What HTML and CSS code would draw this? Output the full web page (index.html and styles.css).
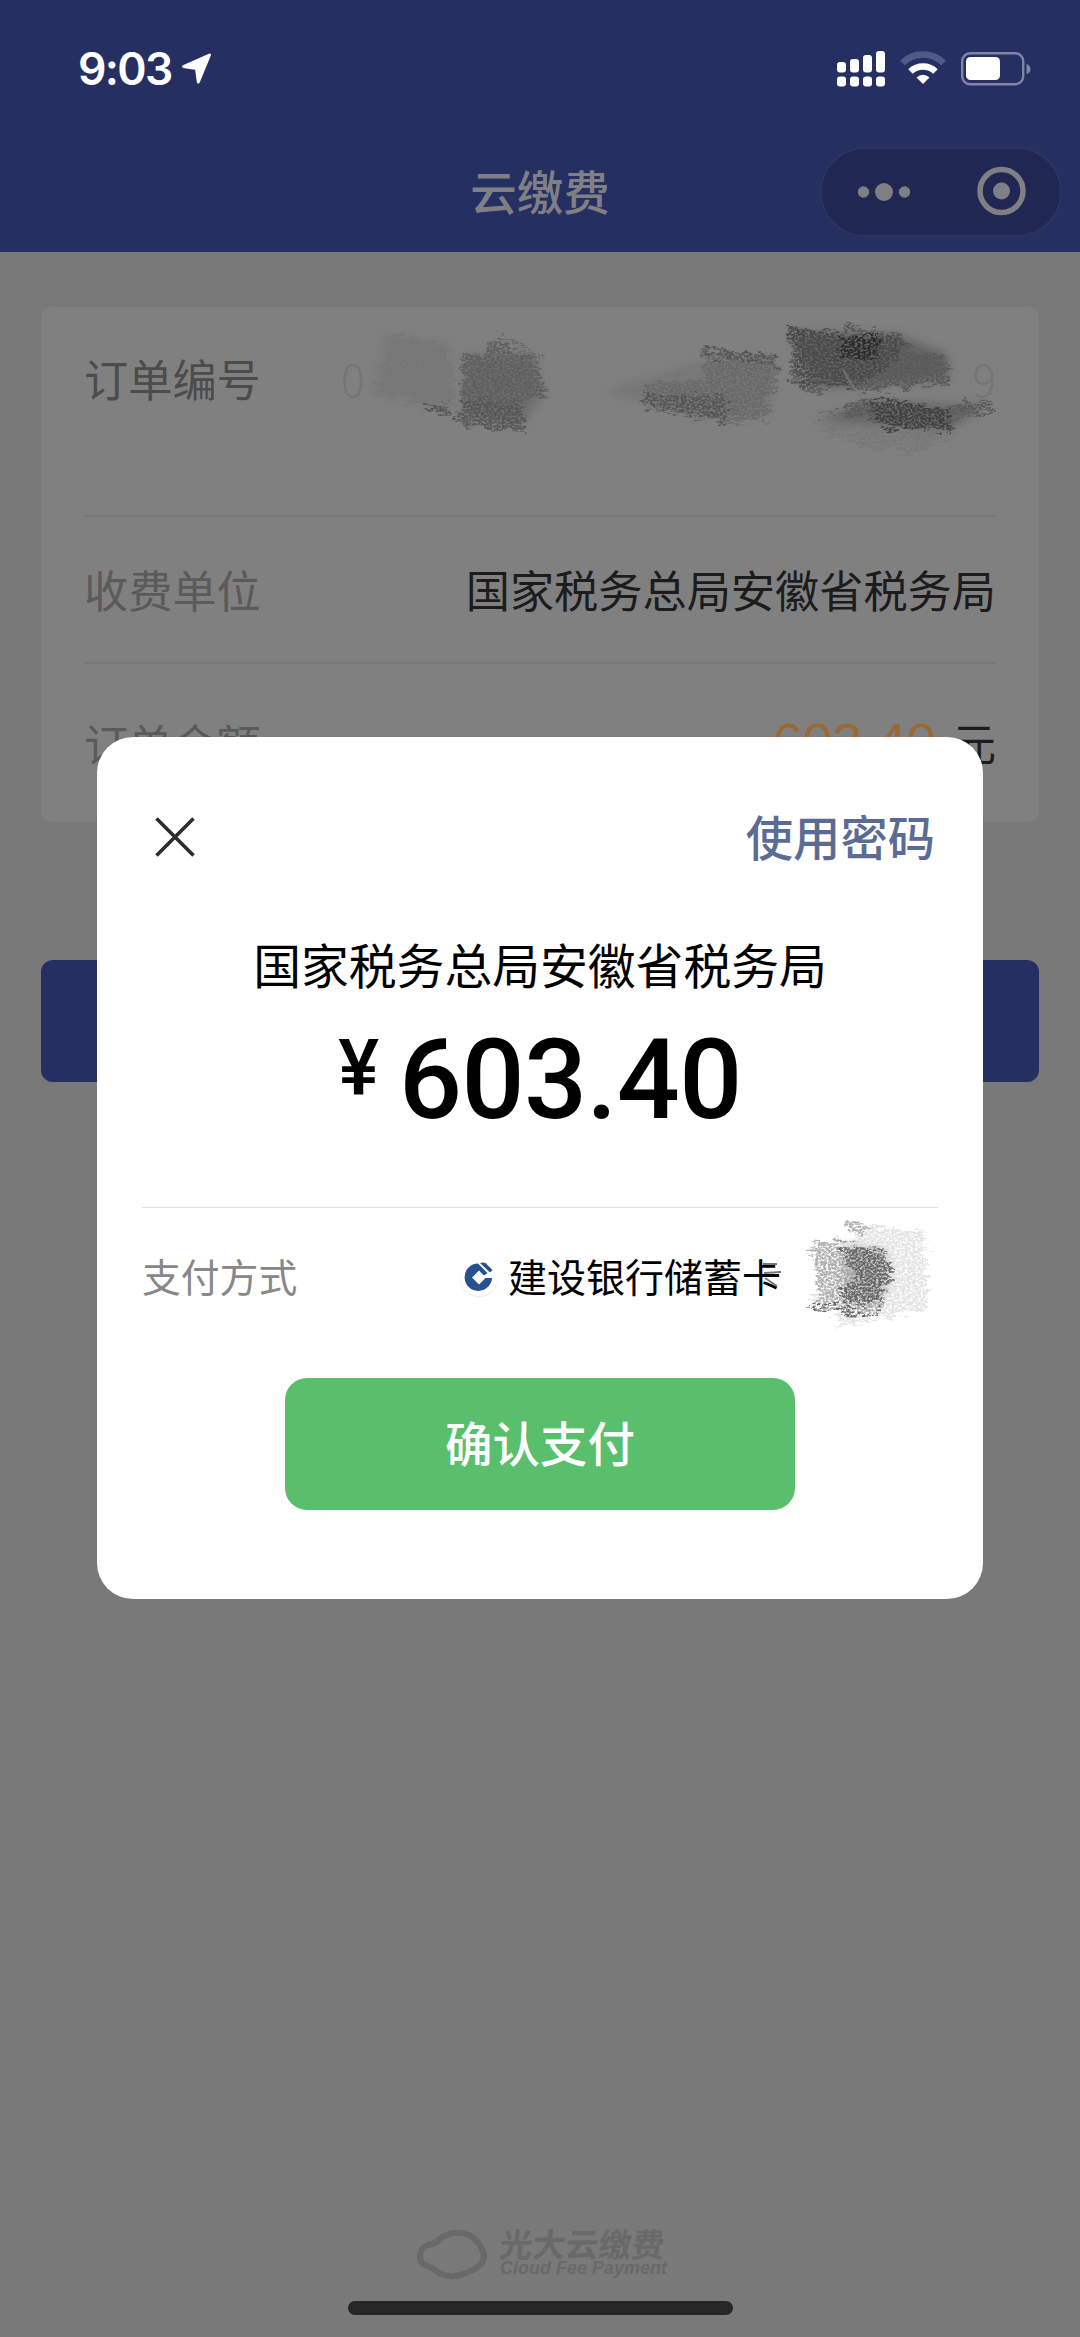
FILE: index.html
```html
<!DOCTYPE html>
<html lang="zh-CN">
<head>
<meta charset="utf-8">
<title>云缴费</title>
<link rel="stylesheet" href="styles.css">
</head>
<body>
<div class="screen">
  <header class="header">
    <div class="status">
      <div class="status-left">
        <span class="time">9:03</span>
        <svg class="location" width="30" height="31" viewBox="0 0 30 31"><path d="M28 2 L2 13.500 L15 15.500 L16.800 29 Z" fill="#fff" stroke="#fff" stroke-width="3" stroke-linejoin="round"/></svg>
      </div>
      <div class="status-right">
        <svg width="48" height="36" viewBox="0 0 48 36" fill="#fff">
          <rect x="0" y="11" width="9" height="10.500" rx="3"/><rect x="13" y="8" width="9" height="13.500" rx="3"/><rect x="26" y="4" width="9" height="17.500" rx="3"/><rect x="39" y="0" width="9" height="21.500" rx="3"/>
          <rect x="0" y="25.500" width="9" height="10" rx="3"/><rect x="13" y="25.500" width="9" height="10" rx="3"/><rect x="26" y="25.500" width="9" height="10" rx="3"/><rect x="39" y="25.500" width="9" height="10" rx="3"/>
        </svg>
        <svg width="46" height="36" viewBox="0 0 46 36">
          <path d="M2.500 12 A29 29 0 0 1 43.500 12" fill="none" stroke="#515a86" stroke-width="6.500"/>
          <path d="M10.500 20.500 A18 18 0 0 1 35.500 20.500" fill="none" stroke="#fff" stroke-width="6.500"/>
          <path d="M23 33 L16.500 26.500 Q23 21 29.500 26.500 Z" fill="#fff"/>
        </svg>
        <svg width="70" height="36" viewBox="0 0 70 36">
          <rect x="1.200" y="2.200" width="61" height="31" rx="8" fill="none" stroke="#7f85a9" stroke-width="2.400"/>
          <rect x="5" y="6" width="34" height="23" rx="4.500" fill="#fff"/>
          <path d="M65.500 13 Q69.500 14 69.500 18 Q69.500 22 65.500 23 Z" fill="#7f85a9"/>
        </svg>
      </div>
    </div>
    <div class="nav">
      <h1 class="nav-title">云缴费</h1>
      <div class="capsule">
        <svg width="120" height="87" viewBox="0 0 120 87" fill="#808084"><circle cx="41.500" cy="44" r="5.700"/><circle cx="62" cy="44" r="9"/><circle cx="82.500" cy="44" r="5.700"/></svg>
        <span class="capsule-line"></span>
        <svg width="118" height="87" viewBox="0 0 118 87"><circle cx="59.500" cy="43" r="21.500" fill="none" stroke="#808084" stroke-width="5.500"/><circle cx="59.500" cy="43" r="8.500" fill="#808084"/></svg>
      </div>
    </div>
  </header>

  <main class="content">
    <section class="card">
      <div class="row row-order"><span class="label dark">订单编号</span><span class="masked"><span>0</span><span>9</span></span></div>
      <div class="row row-payee"><span class="label">收费单位</span><span class="value">国家税务总局安徽省税务局</span></div>
      <div class="row row-amount"><span class="label">订单金额</span><span class="value total"><span class="orange">603.40</span><span>元</span></span></div>
      <svg class="scribble" width="740" height="190" viewBox="300 280 740 190">
        <defs>
          <filter id="chalk" x="-10%" y="-20%" width="120%" height="140%">
            <feTurbulence type="fractalNoise" baseFrequency="0.07 0.22" numOctaves="3" seed="4" result="edge"/>
            <feTurbulence type="fractalNoise" baseFrequency="0.38 0.5" numOctaves="4" seed="11" result="grain"/>
            <feDisplacementMap in="SourceGraphic" in2="edge" scale="22" xChannelSelector="R" yChannelSelector="G" result="d"/>
            <feColorMatrix in="grain" type="matrix" values="0 0 0 0 0  0 0 0 0 0  0 0 0 0 0  4 0 0 0 -1.300" result="a"/>
            <feComposite in="d" in2="a" operator="in"/>
            <feGaussianBlur stdDeviation="0.600"/>
          </filter>
          <filter id="soft" x="-20%" y="-30%" width="140%" height="160%"><feGaussianBlur stdDeviation="5"/></filter>
        </defs>
        <g filter="url(#soft)" opacity=".5">
          <path d="M382 333 L451 343 458 412 372 395Z" fill="#777"/>
          <path d="M464 356 L535 355 542 395 523 425 465 415Z" fill="#5c5c5c"/>
          <path d="M600 392 L705 360 776 358 769 415 720 418Z" fill="#707070"/>
          <path d="M790 332 L898 335 948 355 948 380 815 388Z" fill="#444"/>
          <path d="M815 422 L867 400 985 406 950 430Z" fill="#505050"/>
        </g>
        <g filter="url(#chalk)">
          <path d="M390 333 L445 343 456 380 451 412 405 400 372 395 386 370Z" fill="#747474" opacity=".5"/>
          <path d="M420 403 L452 408 451 414 422 409Z" fill="#555"/>
          <path d="M460 352 L482 355 496 340 537 360 545 397 525 400 523 432 472 427 453 420 463 413Z" fill="#5f5f5f"/>
          <path d="M463 398 L524 404 523 432 455 420Z" fill="#525252" opacity=".7"/>
          <path d="M496 332 L540 357" stroke="#606060" stroke-width="3"/>
          <path d="M643 383 L705 380 702 348 776 355 779 387 769 393 769 420 726 423 643 407Z" fill="#666" opacity=".85"/>
          <path d="M702 348 L776 355 775 367 706 357ZM645 393 L726 397 726 421 645 406Z" fill="#555"/>
          <path d="M787 327 L843 335 843 326 898 333 914 342 905 353 943 353 952 385 884 388 860 393 846 383 815 393 788 382 795 360 787 348Z" fill="#5a5a5a"/>
          <path d="M787 327 L905 339 900 352 882 375 850 385 800 383 795 355Z" fill="#454545" opacity=".8"/>
          <path d="M840 335 L881 337 879 359 843 360Z" fill="#2c2c2c"/>
          <path d="M807 425 L867 398 950 408 991 398 991 412 953 417 950 430 879 428 867 417 840 413Z" fill="#5a5a5a"/>
          <path d="M867 399 L948 409 950 430 879 428Z" fill="#404040"/>
          <path d="M815 430 L950 433 948 442 919 453 871 450Z" fill="#707070" opacity=".5"/>
        </g>
        <path d="M843 369 L852 386 862 399" stroke="#777" stroke-width="2.500" fill="none" opacity=".7"/>
      </svg>
    </section>
    <div class="pay-bar"></div>
  </main>

  <footer class="brand">
    <svg width="72" height="50" viewBox="0 0 72 50"><path d="M7 34 C2 29 3 18 12 15 Q17 14 21 12 C28 3 43 0 53 5 C62 9 65 16 67 22 C71 34 58 40 50 43 C40 48 27 47 19 40 Q14 37 7 34Z" fill="none" stroke="#696969" stroke-width="6"/></svg>
    <div class="brand-text"><div class="brand-cn">光大云缴费</div><div class="brand-en">Cloud Fee Payment</div></div>
  </footer>
  <div class="home"></div>

  <section class="modal">
    <div class="modal-top">
      <svg class="close" width="40" height="40" viewBox="0 0 40 40"><path d="M1.500 1.500 L38.500 38.500 M38.500 1.500 L1.500 38.500" stroke="#2c2c2c" stroke-width="3.600"/></svg>
      <span class="use-password">使用密码</span>
    </div>
    <div class="payee">国家税务总局安徽省税务局</div>
    <div class="amount"><span class="yen">¥</span><span class="figure">603.40</span></div>
    <div class="method">
      <span class="method-label">支付方式</span>
      <div class="bank">
        <span class="bank-icon"><svg width="30" height="30" viewBox="0 0 30 30"><path d="M14 1.500 A13.700 13.700 0 1 0 28 16 L21.500 16 L15 22.500 L8 15.500 L15 8.500 L20 13.500 L23.500 11 Z" fill="#27508f"/><path d="M16 1 Q20 0 22 1.500 L28.500 8 L26 10.500 Z" fill="#27508f"/></svg></span>
        <span class="bank-name">建设银行储蓄卡</span>
      </div>
      <svg class="card-scribble" width="150" height="130" viewBox="795 1215 150 130">
        <path d="M842 1246 L887 1252 890 1285 880 1305 845 1305Z" fill="#888" opacity=".5" filter="url(#soft)"/>
        <g filter="url(#chalk)">
          <path d="M847 1224 L925 1235 928 1310 880 1322 833 1330 840 1317 810 1308 818 1290 817 1243 853 1242Z" fill="#ccc" opacity=".55"/>
          <path d="M846 1224 L870 1230 867 1236 846 1231ZM812 1242 L885 1250 887 1285 880 1317 815 1312 818 1294Z" fill="#999" opacity=".7"/>
          <path d="M838 1246 L887 1252 884 1265 892 1270 889 1286 880 1288 880 1305 845 1307 838 1291 858 1280 845 1262Z" fill="#5a5a5a" opacity=".85"/>
          <path d="M809 1308 L840 1312 882 1320" stroke="#666" stroke-width="5" fill="none"/>
        </g>
      </svg>
      <svg class="card-smear" width="20" height="30" viewBox="0 0 20 30"><path d="M0 5 L14 5 M1 14 L18 13 M2 19 L14 27" stroke="#777" stroke-width="2"/></svg>
    </div>
    <button class="confirm">确认支付</button>
  </section>
</div>
</body>
</html>
```
FILE: styles.css
```css
* { box-sizing: border-box; }
body { margin: 0; font-family: "Noto Sans CJK SC", sans-serif; }
.screen { position: relative; width: 1080px; height: 2337px; background: #797979; overflow: hidden; display: flex; flex-direction: column; }
svg { display: block; flex: none; }

.header { height: 252px; background: #262f62; }
.status { height: 137px; padding: 0 49px 0 78px; display: flex; justify-content: space-between; align-items: center; }
.status-left { display: flex; align-items: center; gap: 9px; }
.time { font: 600 44.500px/54px Inter, sans-serif; color: #fff; width: 94px; letter-spacing: -1.700px; white-space: nowrap; }
.location { width: 31px; }
.status-right { display: flex; align-items: center; gap: 15px; }
.nav { height: 109px; display: grid; grid-template-columns: 1fr auto 1fr; align-items: center; padding: 0 18px; }
.nav-title { grid-column: 2; margin: 0; padding-bottom: 4px; font-size: 46.500px; font-weight: 500; line-height: 60px; color: #808084; }
.capsule { justify-self: end; display: flex; align-items: center; width: 242px; height: 90px; border: 2px solid #2b3361; border-radius: 45px; background: #202752; }
.capsule-line { width: 2px; height: 54px; background: #2b3260; }

.content { flex: 1; padding: 55px 41px 0; }
.card { position: relative; height: 515px; padding: 0 43px; border-radius: 10px; background: #808080; }
.row { display: flex; justify-content: space-between; align-items: center; border-bottom: 2px solid #787878; font-size: 44.200px; line-height: 60px; }
.row-order { height: 210px; padding-bottom: 66px; }
.row-payee { height: 147px; padding-bottom: 2px; }
.row-amount { height: 158px; border: 0; }
.label { color: #5a5a5a; font-size: 44.200px; }
.dark { color: #4c4c4c; }
.value { color: #1c1c1c; }
.total { display: flex; gap: 16px; padding-bottom: 2px; }
.orange { color: #9a6a35; font: 400 54px/60px "Liberation Sans", sans-serif; letter-spacing: -0.300px; }
.masked { display: flex; justify-content: space-between; width: 655px; color: #767676; font-weight: 300; }
.scribble { position: absolute; left: 259px; top: -27px; }
.pay-bar { height: 122px; margin-top: 138px; border-radius: 12px; background: #262f62; }

.brand { display: flex; justify-content: center; gap: 12px; height: 50px; margin-bottom: 21px; color: #666; }
.brand-text { display: flex; flex-direction: column; width: 164px; white-space: nowrap; }
.brand-cn { font-size: 33px; line-height: 27px; font-weight: 700; transform: skewX(-6deg); color: #696969; }
.brand-en { font: italic 700 18px/22px "Liberation Sans", sans-serif; color: #696969; }
.home { align-self: center; width: 385px; height: 14px; margin-bottom: 22px; border-radius: 7px; background: #262626; }

.modal { position: absolute; left: 97px; top: 737px; width: 886px; height: 862px; padding: 0 45px; border-radius: 36px; background: #fff; display: flex; flex-direction: column; }
.modal-top { display: flex; justify-content: space-between; align-items: center; height: 80px; margin-top: 60px; padding: 0 3px 0 13px; }
.use-password { padding-bottom: 3px; font-size: 47.300px; font-weight: 500; color: #5c6b93; }
.payee { margin-top: 52px; height: 70px; font-size: 47.800px; line-height: 70px; text-align: center; color: #000; white-space: nowrap; }
.amount { display: flex; justify-content: center; align-items: flex-start; height: 130px; margin-top: 16px; font: 500 111px/130px Roboto, sans-serif; color: #000; }
.figure { letter-spacing: -0.600px; }
.yen { font-size: 77px; line-height: 107px; margin-right: 20px; }
.method { position: relative; display: flex; justify-content: space-between; align-items: center; margin-top: 62px; height: 138px; border-top: 1px solid #e0e0e0; }
.method-label { padding-bottom: 3px; font-size: 38.800px; color: #888; }
.bank { display: flex; align-items: center; gap: 10px; margin-right: 157px; }
.bank-icon { display: flex; align-items: center; justify-content: center; width: 38px; height: 38px; border-radius: 50%; box-shadow: 0 1px 1px #e8e8e8; }
.bank-name { padding-bottom: 3px; font-size: 39px; color: #000; }
.card-scribble { position: absolute; left: 653px; top: 5px; }
.card-smear { position: absolute; left: 621px; top: 51px; }
.confirm { align-self: center; width: 510px; height: 132px; margin-top: 33px; padding: 0 0 5px; border: 0; border-radius: 22px; background: #5abf6d; color: #fff; font: 500 47.500px/60px "Noto Sans CJK SC", sans-serif; }
```
